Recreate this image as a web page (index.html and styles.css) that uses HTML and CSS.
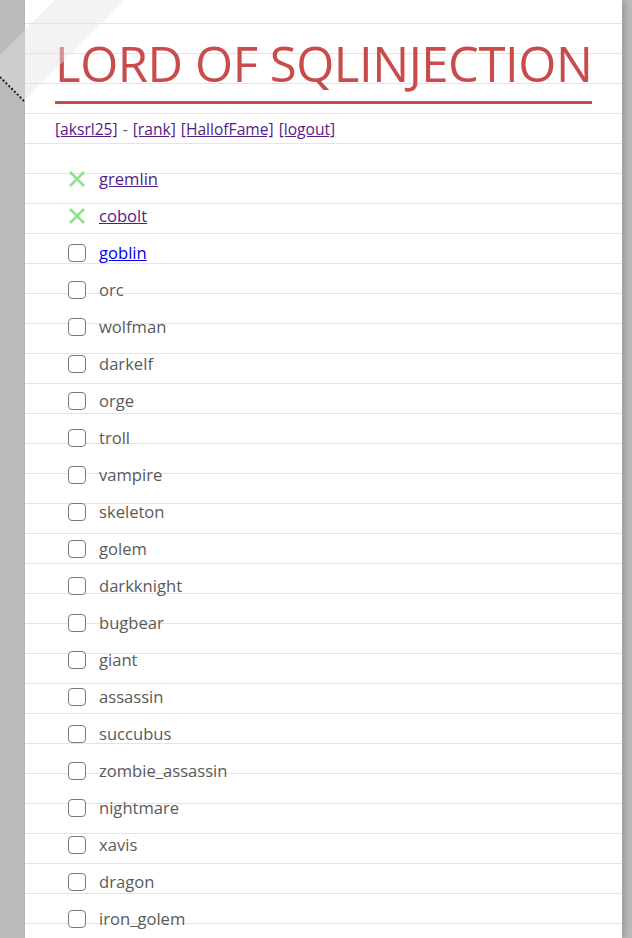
FILE: index.html
```html
<!DOCTYPE html>
<html>
<head>
<meta charset="utf-8">
<title>LORD OF SQLINJECTION</title>
<link rel="stylesheet" href="styles.css">
</head>
<body>
<div class="paper">
  <h1 class="title">LORD OF SQLINJECTION</h1>
  <div class="nav">
    <a class="visited" href="#">[aksrl25]</a> - <a class="visited" href="#">[rank]</a> <a class="visited" href="#">[HallofFame]</a> <a class="visited" href="#">[logout]</a>
  </div>
  <ul class="list">
    <li class="row"><svg class="mark" viewBox="0 0 18 18"><path d="M2 2L16 16M16 2L2 16"/></svg><a class="visited" href="#">gremlin</a></li>
    <li class="row"><svg class="mark" viewBox="0 0 18 18"><path d="M2 2L16 16M16 2L2 16"/></svg><a class="visited" href="#">cobolt</a></li>
    <li class="row"><span class="box"></span><a class="fresh" href="#">goblin</a></li>
    <li class="row"><span class="box"></span><span>orc</span></li>
    <li class="row"><span class="box"></span><span>wolfman</span></li>
    <li class="row"><span class="box"></span><span>darkelf</span></li>
    <li class="row"><span class="box"></span><span>orge</span></li>
    <li class="row"><span class="box"></span><span>troll</span></li>
    <li class="row"><span class="box"></span><span>vampire</span></li>
    <li class="row"><span class="box"></span><span>skeleton</span></li>
    <li class="row"><span class="box"></span><span>golem</span></li>
    <li class="row"><span class="box"></span><span>darkknight</span></li>
    <li class="row"><span class="box"></span><span>bugbear</span></li>
    <li class="row"><span class="box"></span><span>giant</span></li>
    <li class="row"><span class="box"></span><span>assassin</span></li>
    <li class="row"><span class="box"></span><span>succubus</span></li>
    <li class="row"><span class="box"></span><span>zombie_assassin</span></li>
    <li class="row"><span class="box"></span><span>nightmare</span></li>
    <li class="row"><span class="box"></span><span>xavis</span></li>
    <li class="row"><span class="box"></span><span>dragon</span></li>
    <li class="row"><span class="box"></span><span>iron_golem</span></li>
  </ul>
</div>
<svg class="tape" width="130" height="110" viewBox="0 0 130 110">
  <polygon points="55,0 125,0 24,101 -11,66" fill="rgba(229,229,229,0.46)"/>
  <line x1="0" y1="77" x2="25" y2="102" stroke="#1e1e1e" stroke-width="2" stroke-dasharray="2 2"/>
</svg>
</body>
</html>
```
FILE: styles.css
```css
html, body {
  margin: 0;
  padding: 0;
  overflow: hidden;
}
body {
  background: #bababa;
  font-family: "Open Sans", "Noto Sans", sans-serif;
  color: #5a5a5a;
}
.paper {
  margin-left: 25px;
  width: 597px;
  min-height: 100vh;
  box-sizing: border-box;
  padding: 30px 30px 0 30px;
  background-color: #fff;
  background-image: repeating-linear-gradient(to bottom,
    transparent 0, transparent 23px, #e4e4e4 23px, #e4e4e4 24px, transparent 24px, transparent 30px);
  box-shadow: 3px 0 6px rgba(0, 0, 0, 0.18);
}
.title {
  margin: 0;
  font-size: 49px;
  font-weight: 400;
  letter-spacing: -0.45px;
  line-height: 66px;
  color: #c94c4c;
  padding-bottom: 5px;
  border-bottom: 3px solid #c94c4c;
  white-space: nowrap;
}
.nav {
  margin-top: 13px;
  font-size: 15.6px;
  line-height: 24px;
  word-spacing: 1px;
}
a.visited { color: #551a8b; }
a.fresh { color: #0000ee; }
.list {
  list-style: none;
  margin: 19px 0 0 0;
  padding: 0 0 0 13px;
}
.row {
  height: 37px;
  display: flex;
  align-items: center;
  gap: 13px;
  font-size: 16.6px;
}
.box {
  width: 18px;
  height: 18px;
  box-sizing: border-box;
  border: 1px solid #7a7a7a;
  border-radius: 4px;
  background: #fff;
  flex: none;
}
.mark {
  width: 18px;
  height: 18px;
  flex: none;
}
.mark path {
  stroke: #8fe08f;
  stroke-width: 2.6;
  fill: none;
}
.tape {
  position: absolute;
  left: 0;
  top: 0;
  pointer-events: none;
}
```
